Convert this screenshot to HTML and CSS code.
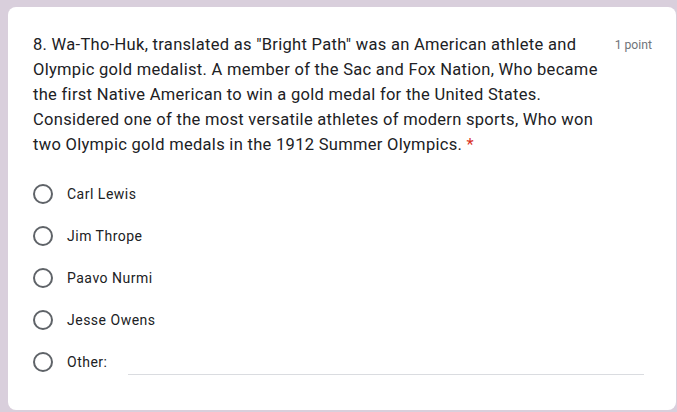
FILE: index.html
```html
<!DOCTYPE html>
<html>
<head>
<meta charset="utf-8">
<link rel="stylesheet" href="styles.css">
</head>
<body>
<div class="card">
  <div class="header">
    <div class="title">8. Wa-Tho-Huk, translated as "Bright Path" was an American athlete and Olympic gold medalist. A member of the Sac and Fox Nation, Who became the first Native American to win a gold medal for the United States. Considered one of the most versatile athletes of modern sports, Who won two Olympic gold medals in the 1912 Summer Olympics. <span class="req">*</span></div>
    <div class="points">1 point</div>
  </div>
  <div class="options">
    <label class="option"><span class="radio"></span><span class="label">Carl Lewis</span></label>
    <label class="option"><span class="radio"></span><span class="label">Jim Thrope</span></label>
    <label class="option"><span class="radio"></span><span class="label">Paavo Nurmi</span></label>
    <label class="option"><span class="radio"></span><span class="label">Jesse Owens</span></label>
    <label class="option"><span class="radio"></span><span class="label">Other:</span><span class="other-input"></span></label>
  </div>
</div>
</body>
</html>
```
FILE: styles.css
```css
html, body {
  margin: 0;
  padding: 0;
}
body {
  background: #d9cfdc;
  padding: 7px 1px 2px 8px;
  font-family: Roboto, "Liberation Sans", sans-serif;
  color: #202124;
}
.card {
  background: #fff;
  border-radius: 8px;
  padding: 25px 24px 27px 25px;
  min-height: 351px;
}
.header {
  display: flex;
  align-items: flex-start;
}
.title {
  flex: 1;
  font-size: 16.5px;
  line-height: 25px;
  letter-spacing: 0.3px;
  color: #202124;
}
.req {
  color: #d93025;
}
.points {
  flex: none;
  margin-left: 6px;
  margin-top: 4px;
  font-size: 12.2px;
  line-height: 18px;
  color: #70757a;
}
.options {
  margin-top: 16px;
  display: flex;
  flex-direction: column;
}
.option {
  display: flex;
  align-items: center;
  height: 42px;
}
.radio {
  flex: none;
  width: 16px;
  height: 16px;
  border: 2px solid #5f6368;
  border-radius: 50%;
}
.label {
  margin-left: 14px;
  font-size: 14px;
  letter-spacing: 0.5px;
  color: #202124;
}
.other-input {
  flex: 1;
  align-self: flex-end;
  margin: 0 8px 8px 21px;
  border-bottom: 1px solid #dadce0;
}
```
